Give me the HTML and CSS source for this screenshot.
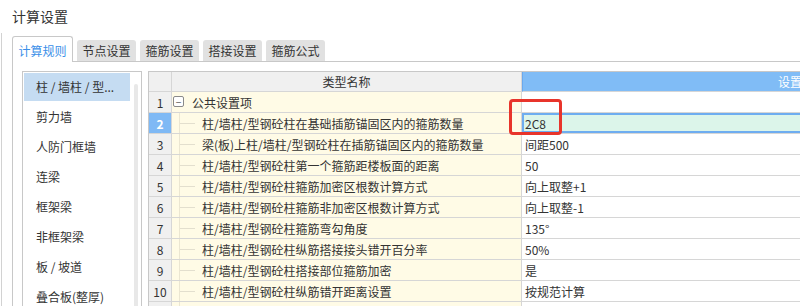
FILE: index.html
```html
<!DOCTYPE html>
<html lang="zh-CN">
<head>
    <meta charset="UTF-8">
    <title>计算设置</title>
    <link rel="stylesheet" href="styles.css">
</head>
<body>
    <div class="title">计算设置</div>
    <div class="frame">
        <div class="tabs">
            <div class="tab active">计算规则</div>
            <div class="tab">节点设置</div>
            <div class="tab">箍筋设置</div>
            <div class="tab">搭接设置</div>
            <div class="tab">箍筋公式</div>
        </div>
        <div class="page">
            <div class="list">
                <div class="items">
                    <div class="item selected">柱 / 墙柱 / 型...</div>
                    <div class="item">剪力墙</div>
                    <div class="item">人防门框墙</div>
                    <div class="item">连梁</div>
                    <div class="item">框架梁</div>
                    <div class="item">非框架梁</div>
                    <div class="item">板 / 坡道</div>
                    <div class="item">叠合板(整厚)</div>
                </div>
                <div class="scroll"></div>
            </div>
            <div class="grid">
                <table class="sheet">
                    <colgroup>
                        <col class="col-num">
                        <col class="col-name">
                        <col class="col-value">
                    </colgroup>
                    <thead>
                        <tr>
                            <th class="num"></th>
                            <th class="name-head">类型名称</th>
                            <th class="value-head">设置值</th>
                        </tr>
                    </thead>
                    <tbody>
                        <tr>
                            <td class="num">1</td>
                            <td class="name group"><span class="toggle">−</span>公共设置项</td>
                            <td class="value"></td>
                        </tr>
                        <tr>
                            <td class="num current">2</td>
                            <td class="name leaf">柱/墙柱/型钢砼柱在基础插筋锚固区内的箍筋数量</td>
                            <td class="value current">2C8</td>
                        </tr>
                        <tr>
                            <td class="num">3</td>
                            <td class="name leaf">梁(板)上柱/墙柱/型钢砼柱在插筋锚固区内的箍筋数量</td>
                            <td class="value">间距500</td>
                        </tr>
                        <tr>
                            <td class="num">4</td>
                            <td class="name leaf">柱/墙柱/型钢砼柱第一个箍筋距楼板面的距离</td>
                            <td class="value">50</td>
                        </tr>
                        <tr>
                            <td class="num">5</td>
                            <td class="name leaf">柱/墙柱/型钢砼柱箍筋加密区根数计算方式</td>
                            <td class="value">向上取整+1</td>
                        </tr>
                        <tr>
                            <td class="num">6</td>
                            <td class="name leaf">柱/墙柱/型钢砼柱箍筋非加密区根数计算方式</td>
                            <td class="value">向上取整-1</td>
                        </tr>
                        <tr>
                            <td class="num">7</td>
                            <td class="name leaf">柱/墙柱/型钢砼柱箍筋弯勾角度</td>
                            <td class="value">135°</td>
                        </tr>
                        <tr>
                            <td class="num">8</td>
                            <td class="name leaf">柱/墙柱/型钢砼柱纵筋搭接接头错开百分率</td>
                            <td class="value">50%</td>
                        </tr>
                        <tr>
                            <td class="num">9</td>
                            <td class="name leaf">柱/墙柱/型钢砼柱搭接部位箍筋加密</td>
                            <td class="value">是</td>
                        </tr>
                        <tr>
                            <td class="num">10</td>
                            <td class="name leaf">柱/墙柱/型钢砼柱纵筋错开距离设置</td>
                            <td class="value">按规范计算</td>
                        </tr>
                        <tr>
                            <td class="num"></td>
                            <td class="name leaf"></td>
                            <td class="value"></td>
                        </tr>
                    </tbody>
                </table>
                <!-- red highlight drawn over the selected cell -->
                <div class="mark"></div>
            </div>
        </div>
    </div>
</body>
</html>
```

FILE: styles.css
```css
* {
    margin: 0;
    padding: 0;
    box-sizing: border-box;
}

html, body {
    width: 800px;
    height: 306px;
    overflow: hidden;
    background-color: #fff;
    color: #333;
    font-family: "Noto Sans CJK SC", "Noto Sans", sans-serif;
    font-size: 12px;
}

.title {
    height: 33px;
    line-height: 33px;
    padding-left: 12px;
    font-size: 14px;
}

.frame {
    margin-left: 1px;
    border-left: 1px solid #d2d2d2;
    padding-left: 10px;
    height: 273px;
}

/* Tab strip */
.tabs {
    display: flex;
    align-items: flex-end;
    gap: 4px;
    height: 29px;
    border-bottom: 1px solid #c8c8c8;
}

.tab {
    width: 59px;
    height: 21px;
    line-height: 21px;
    text-align: center;
    background-color: #e1e1e1;
    border-radius: 3px 3px 0 0;
}

.tab.active {
    width: 61px;
    height: 26px;
    line-height: 21px;
    padding-top: 3px;
    margin-bottom: -1px;
    background-color: #fff;
    border: 1px solid #c8c8c8;
    border-bottom: none;
    color: #3b8fe8;
}

/* Tab page */
.page {
    display: flex;
    gap: 6px;
    height: 244px;
    padding: 9px 0 0 9px;
    border-left: 1px solid #c8c8c8;
    overflow: hidden;
}

.list {
    display: flex;
    width: 120px;
    height: 235px;
    padding: 1px;
    border: 1px solid #c8c8c8;
    border-bottom: none;
    overflow: hidden;
}

.items {
    width: 106px;
}

.item {
    height: 28px;
    line-height: 28px;
    margin-bottom: 2px;
    padding-left: 12px;
    white-space: nowrap;
}

.item.selected {
    background-color: #c5dcf2;
}

.scroll {
    width: 4px;
    height: 222px;
    margin: 11px 0 0 4px;
    background-color: #e8e8e8;
    border-radius: 2px 2px 0 0;
}

/* Settings grid */
.grid {
    position: relative;
    flex: 1;
    height: 235px;
    overflow: hidden;
    border-top: 1px solid #c8c8c8;
    border-left: 1px solid #c8c8c8;
}

.sheet {
    width: 921px;
    table-layout: fixed;
    border-collapse: separate;
    border-spacing: 0;
}

.col-num { width: 23px; }
.col-name { width: 350px; }
.col-value { width: 548px; }

.sheet th,
.sheet td {
    height: 21px;
    padding: 0;
    border-right: 1px solid #d6d6d6;
    border-bottom: 1px solid #d6d6d6;
    font-weight: normal;
    white-space: nowrap;
    overflow: hidden;
}

.sheet th {
    height: 20px;
    background-color: #f0f0f0;
    text-align: center;
}

.sheet th.value-head {
    background-color: #80bcf6;
    border-left: 1px solid #6aa9ee;
    color: #fff;
}

.num {
    background-color: #f0f0f0;
    text-align: center;
}

.num.current {
    background-color: #7fb9f5;
    color: #fff;
    font-weight: bold;
}

.name {
    position: relative;
    background-color: #fffbe6;
}

.name.leaf {
    padding-left: 30px;
}

/* tree guide lines */
.name.leaf::before {
    content: "";
    position: absolute;
    left: 7px;
    top: 0;
    bottom: 0;
    border-left: 1px solid #ebe6d2;
}

.name.leaf::after {
    content: "";
    position: absolute;
    left: 8px;
    width: 15px;
    top: 50%;
    border-top: 1px solid #e3dfce;
}

.name.group {
    padding-left: 20px;
}

.toggle {
    position: absolute;
    left: 1px;
    top: 4px;
    width: 11px;
    height: 11px;
    line-height: 9px;
    border: 1px solid #8a8a8a;
    border-radius: 2px;
    background-color: #fff;
    text-align: center;
    font-size: 10px;
    color: #555;
}

.value {
    padding-left: 3px !important;
    background-color: #fff;
}

.value.current {
    background-color: #dcf5ea;
    box-shadow: inset 0 0 0 2px #6eadf0;
}

.mark {
    position: absolute;
    left: 360px;
    top: 27px;
    width: 53px;
    height: 36px;
    border: 3px solid #e8342b;
    border-radius: 4px;
}
```
